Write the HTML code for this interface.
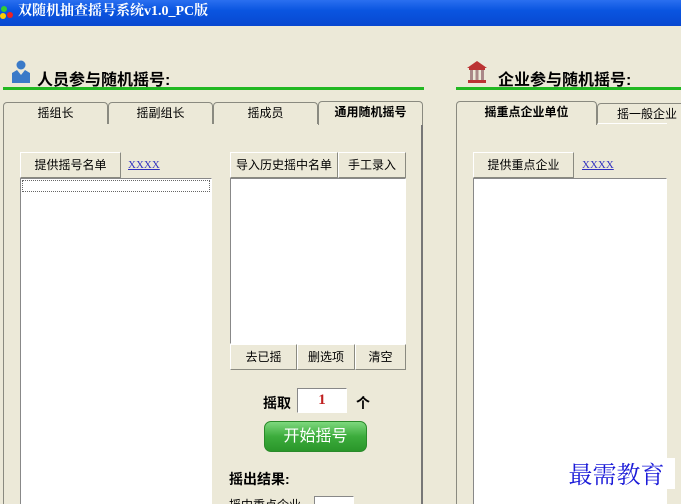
<!DOCTYPE html>
<html style="width:681px;height:504px;overflow:hidden"><head><meta charset="utf-8"><style>
*{margin:0;padding:0;box-sizing:border-box}
body{width:681px;height:504px;overflow:hidden;background:#ece9d8;position:relative;font-family:"Liberation Sans","Noto Sans CJK SC",sans-serif;font-size:12px;color:#000}
.a{position:absolute}
.title{left:0;top:0;width:681px;height:26px;background:linear-gradient(#2a6ff0,#0a55e0 40%,#0848d0);color:#fff;font-weight:bold;font-size:14px;line-height:24px;padding-left:18px;font-family:"Liberation Serif","Noto Serif CJK SC",serif}
.btn{background:#ece9d8;border:1px solid;border-color:#fff #8a8a80 #8a8a80 #fff;text-align:center;line-height:24px;font-size:12px}
.list{background:#fff;border:1px solid;border-color:#888 #fff #fff #888}
.tab{border:1px solid #8a8a80;border-bottom:none;border-radius:4px 4px 0 0;text-align:center;line-height:20px;height:22px;background:#ece9d8}
.h{font-size:16px;font-weight:bold}
.link{color:#3030c0;font-size:11px;text-decoration:underline;font-family:"Liberation Serif",serif}
</style></head><body>
<div class="a title">双随机抽查摇号系统v1.0_PC版</div>
<div class="a" style="left:1px;top:6px;width:6px;height:6px;background:#3c3;border-radius:3px"></div>
<div class="a" style="left:0;top:13px;width:6px;height:6px;background:#fc0;border-radius:3px"></div>
<div class="a" style="left:7px;top:12px;width:6px;height:6px;background:#e22;border-radius:3px"></div>

<svg class="a" style="left:11px;top:60px" width="20" height="24"><circle cx="10" cy="5" r="4.5" fill="#3a7ac8"/><path d="M1 23V13l5-3 4 5 4-5 5 3v10z" fill="#3a7ac8"/></svg>
<div class="a h" style="left:37px;top:66px">人员参与随机摇号:</div>
<div class="a" style="left:3px;top:87px;width:421px;height:3px;background:#22b822"></div>

<div class="a" style="left:3px;top:123px;width:420px;height:381px;border:1px solid #8a8a80;border-bottom:none;border-right:2px solid #777;background:#ece9d8"></div>
<div class="a tab" style="left:3px;top:102px;width:105px">摇组长</div>
<div class="a tab" style="left:108px;top:102px;width:105px">摇副组长</div>
<div class="a tab" style="left:213px;top:102px;width:105px">摇成员</div>
<div class="a tab" style="left:318px;top:101px;width:105px;height:24px;font-weight:bold">通用随机摇号</div>

<div class="a btn" style="left:20px;top:152px;width:101px;height:26px">提供摇号名单</div>
<div class="a link" style="left:128px;top:159px">XXXX</div>
<div class="a list" style="left:20px;top:178px;width:192px;height:326px;border-bottom:none"></div>
<div class="a" style="left:22px;top:180px;width:188px;height:12px;border:1px dotted #666"></div>

<div class="a btn" style="left:230px;top:152px;width:108px;height:26px">导入历史摇中名单</div>
<div class="a btn" style="left:338px;top:152px;width:68px;height:26px">手工录入</div>
<div class="a list" style="left:230px;top:178px;width:176px;height:166px"></div>
<div class="a btn" style="left:230px;top:344px;width:67px;height:26px">去已摇</div>
<div class="a btn" style="left:297px;top:344px;width:58px;height:26px">删选项</div>
<div class="a btn" style="left:355px;top:344px;width:51px;height:26px">清空</div>

<div class="a" style="left:263px;top:393px;font-size:14px;font-weight:bold">摇取</div>
<div class="a list" style="left:297px;top:388px;width:50px;height:25px;color:#c02020;font-weight:bold;font-size:15px;text-align:center;line-height:22px;font-family:'Liberation Serif',serif">1</div>
<div class="a" style="left:356px;top:393px;font-size:14px;font-weight:bold">个</div>
<div class="a" style="left:264px;top:421px;width:103px;height:31px;border-radius:7px;background:linear-gradient(#7ed87e,#3cac3c 50%,#2a962a);border:1px solid #2a8a2a;color:#fff;font-size:16px;text-align:center;line-height:29px">开始摇号</div>
<div class="a" style="left:229px;top:469px;font-size:14px;font-weight:bold">摇出结果:</div>
<div class="a" style="left:229px;top:496px;font-size:12px">摇中重点企业</div>
<div class="a list" style="left:314px;top:496px;width:40px;height:8px;border-bottom:none"></div>

<svg class="a" style="left:465px;top:60px" width="24" height="24"><path d="M2 8L12 1l10 7z" fill="#b33"/><rect x="4" y="8" width="16" height="2" fill="#b33"/><rect x="5" y="10" width="3" height="10" fill="#a88"/><rect x="10.5" y="10" width="3" height="10" fill="#a88"/><rect x="16" y="10" width="3" height="10" fill="#a88"/><rect x="3" y="20" width="18" height="3" fill="#b33"/></svg>
<div class="a h" style="left:498px;top:66px">企业参与随机摇号:</div>
<div class="a" style="left:456px;top:87px;width:225px;height:3px;background:#22b822"></div>

<div class="a" style="left:456px;top:123px;width:240px;height:381px;border:1px solid #8a8a80;border-bottom:none;background:#ece9d8"></div>
<div class="a tab" style="left:456px;top:101px;width:141px;height:24px;font-weight:bold">摇重点企业单位</div>
<div class="a tab" style="left:597px;top:103px;width:100px;height:21px;border-bottom:1px solid #fff">摇一般企业</div>
<div class="a btn" style="left:473px;top:152px;width:101px;height:26px">提供重点企业</div>
<div class="a link" style="left:582px;top:159px">XXXX</div>
<div class="a list" style="left:473px;top:178px;width:194px;height:326px;border-bottom:none"></div>
<div class="a" style="left:667px;top:123px;width:14px;height:381px;background:#ece9d8"></div>
<div class="a" style="left:558px;top:458px;width:117px;height:31px;background:#fff;color:#1b1bd8;font-size:24px;line-height:30px;text-align:center;font-family:'Noto Serif CJK SC',serif">最需教育</div>
</body></html>
